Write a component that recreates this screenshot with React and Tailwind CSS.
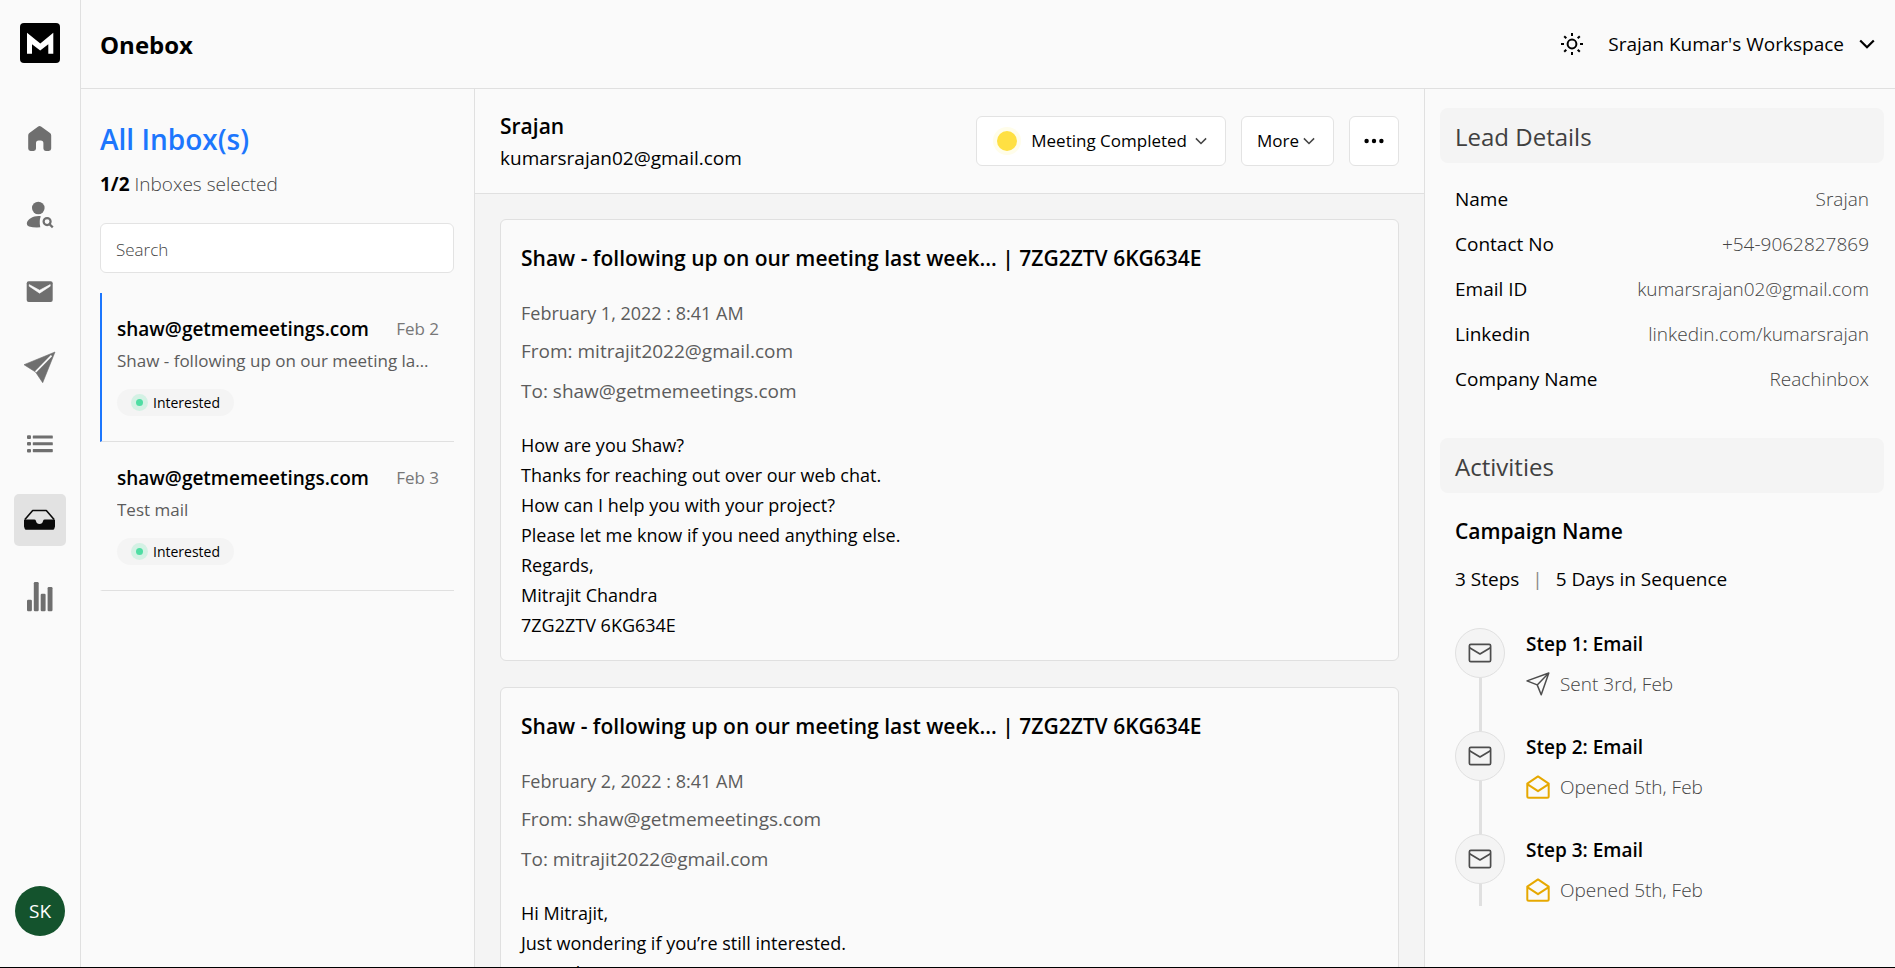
import React from "react";

function Logo() {
  return (
    <svg width="40" height="40" viewBox="0 0 40 40" aria-hidden="true">
      <rect width="40" height="40" rx="4" fill="#000" />
      <path d="M7 9.7 20.3 20.4 33.3 9.7V30.7H28.3V21.3L20.2 27.4 12 21.3V30.7H7Z" fill="#fff" />
    </svg>
  );
}

function NavSvg({ children }) {
  return (
    <svg width="52" height="52" viewBox="0 0 52 52" aria-hidden="true">
      {children}
    </svg>
  );
}

const GREY = "#6f6f6f";

const navItems = [
  {
    label: "Home",
    icon: (
      <path
        fill={GREY}
        d="M24.2 12.5a2.3 2.3 0 0 1 2.8 0l9 6.6q1.2 1 1.2 2.4V34.6a2.4 2.4 0 0 1-2.4 2.4h-3a2.4 2.4 0 0 1-2.4-2.4V29.2q0-2.6-2.6-2.6h-2.2q-2.6 0-2.6 2.6v5.4a2.4 2.4 0 0 1-2.4 2.4h-3a2.4 2.4 0 0 1-2.4-2.4V21.5q0-1.4 1.2-2.4Z"
      />
    ),
  },
  {
    label: "Leads",
    icon: (
      <>
        <circle cx="24.3" cy="18" r="6.3" fill={GREY} />
        <path d="M26.8 26.2Q24.9 31 26.3 37.3 20 37.8 15 36.5 12.6 35.6 12.8 33.3C13.5 29 19.5 25.4 26.8 26.2Z" fill={GREY} />
        <circle cx="33.1" cy="31.6" r="3.5" fill="none" stroke={GREY} strokeWidth="2.2" />
        <path d="M35.6 34.2 38 36.6" stroke={GREY} strokeWidth="2.2" strokeLinecap="square" />
      </>
    ),
  },
  {
    label: "Mail",
    icon: (
      <>
        <rect x="12.7" y="15.3" width="26" height="20.7" rx="2" fill={GREY} />
        <path d="M15.2 18.6V20.2L25.6 27.2 36.2 20.2V18.6L25.6 24.2Z" fill="#fafafa" stroke="#fafafa" strokeWidth=".6" />
      </>
    ),
  },
  {
    label: "Send",
    icon: (
      <>
        <path d="M10 22.7 41 10 28.7 40.7 21.5 30Z" fill={GREY} stroke={GREY} strokeWidth=".6" strokeLinejoin="round" />
        <path d="M21.6 29.8 37.5 13.6" stroke="#fafafa" strokeWidth="1.7" />
      </>
    ),
  },
  {
    label: "Sequences",
    icon: (
      <g fill={GREY}>
        {[17.3, 24, 30.9].map((y) => (
          <React.Fragment key={y}>
            <rect x="13" y={y} width="4" height="3.6" rx="1" />
            <rect x="18.8" y={y + 0.2} width="20" height="3.1" rx=".6" />
          </React.Fragment>
        ))}
      </g>
    ),
  },
  {
    label: "Onebox",
    active: true,
    icon: (
      <>
        <path d="M10.9 25.6 18.7 16.5H32.3L40.1 25.6" fill="none" stroke="#0a0a0a" strokeWidth="1.6" strokeLinejoin="round" />
        <path d="M10 26Q10 25.4 10.6 25.4H20.2Q21.6 25.4 21.9 26.8 22.6 30 25.5 30T29.1 26.8Q29.4 25.4 30.8 25.4H40.4Q41 25.4 41 26V32.5L40.2 35.1Q40 35.7 39 35.7H12Q11 35.7 10.8 35.1L10 32.5Z" fill="#0a0a0a" />
      </>
    ),
  },
  {
    label: "Analytics",
    icon: (
      <g fill={GREY}>
        <rect x="13" y="29.7" width="4.9" height="11.6" rx="1.2" />
        <rect x="19.8" y="12" width="4.9" height="29.3" rx="1.2" />
        <rect x="26.7" y="23.7" width="4.9" height="17.6" rx="1.2" />
        <rect x="33.6" y="17" width="4.9" height="24.3" rx="1.2" />
      </g>
    ),
  },
];

function Chevron({ width, height, strokeWidth, color }) {
  return (
    <svg width={width} height={height} viewBox="0 0 16 10" fill="none" stroke={color} strokeWidth={strokeWidth} aria-hidden="true">
      <path d="M1.2 1.5 8 8.3 14.8 1.5" />
    </svg>
  );
}

function SunIcon() {
  return (
    <svg width="24" height="24" viewBox="0 0 24 24" fill="none" stroke="#000" strokeWidth="2" aria-hidden="true">
      <circle cx="12" cy="12" r="4.4" />
      <path d="M12 1v3M12 20v3M1 12h3M20 12h3M4.2 4.2l2.1 2.1M17.7 17.7l2.1 2.1M4.2 19.8l2.1-2.1M17.7 6.3l2.1-2.1" />
    </svg>
  );
}

function EnvelopeIcon() {
  return (
    <svg width="24" height="20" viewBox="0 0 24 20" fill="none" stroke="#4d4d4d" strokeWidth="1.7" strokeLinejoin="round" aria-hidden="true">
      <rect x="1.4" y="1.3" width="21.2" height="17.4" rx="1.4" />
      <path d="M1.6 4.8 12 10.9 22.4 4.8" />
    </svg>
  );
}

function SentIcon() {
  return (
    <svg width="24" height="24" viewBox="0 0 24 24" fill="none" stroke="#4d4d4d" strokeWidth="1.5" strokeLinejoin="round" aria-hidden="true">
      <path d="M1 8.9 22.8 1 15.2 22.7 11.2 12.9ZM11.2 12.9 22.8 1" />
    </svg>
  );
}

function OpenedIcon() {
  return (
    <svg width="24" height="24" viewBox="0 0 24 24" fill="none" stroke="#e6a800" strokeWidth="2" strokeLinejoin="round" aria-hidden="true">
      <path d="M1.3 8.6 12 1.4 22.7 8.6V21.2Q22.7 22.7 21.2 22.7H2.8Q1.3 22.7 1.3 21.2ZM1.3 9.2 12 16.2 22.7 9.2" />
    </svg>
  );
}

const threads = [
  { email: "shaw@getmemeetings.com", date: "Feb 2", subject: "Shaw - following up on our meeting last week...", selected: true },
  { email: "shaw@getmemeetings.com", date: "Feb 3", subject: "Test mail" },
];

const messages = [
  {
    date: "February 1, 2022 : 8:41 AM",
    from: "mitrajit2022@gmail.com",
    to: "shaw@getmemeetings.com",
    body: [
      "How are you Shaw?",
      "Thanks for reaching out over our web chat.",
      "How can I help you with your project?",
      "Please let me know if you need anything else.",
      "Regards,",
      "Mitrajit Chandra",
      "7ZG2ZTV 6KG634E",
    ],
  },
  {
    date: "February 2, 2022 : 8:41 AM",
    from: "shaw@getmemeetings.com",
    to: "mitrajit2022@gmail.com",
    body: ["Hi Mitrajit,", "Just wondering if you’re still interested.", "Regards,"],
  },
];

const details = [
  ["Name", "Srajan"],
  ["Contact No", "+54-9062827869"],
  ["Email ID", "kumarsrajan02@gmail.com"],
  ["Linkedin", "linkedin.com/kumarsrajan"],
  ["Company Name", "Reachinbox"],
];

const steps = [
  { title: "Step 1: Email", status: "Sent 3rd, Feb", icon: <SentIcon /> },
  { title: "Step 2: Email", status: "Opened 5th, Feb", icon: <OpenedIcon /> },
  { title: "Step 3: Email", status: "Opened 5th, Feb", icon: <OpenedIcon /> },
];

function Sidebar() {
  return (
    <aside className="flex w-[81px] shrink-0 flex-col items-center border-r border-[#e0e0e0] pt-[23px] pb-[31px]">
      <a href="#home" aria-label="Home page">
        <Logo />
      </a>
      <nav className="mt-[51px] flex flex-col gap-6">
        {navItems.map((item) => (
          <a
            key={item.label}
            href={"#" + item.label.toLowerCase()}
            aria-label={item.label}
            className={item.active ? "rounded-[5px] bg-[#e2e2e2]" : "rounded-[5px]"}
          >
            <NavSvg>{item.icon}</NavSvg>
          </a>
        ))}
      </nav>
      <button className="mt-auto flex size-[50px] items-center justify-center rounded-full bg-[#14532d] text-[19px] text-white">SK</button>
    </aside>
  );
}

function Header() {
  return (
    <header className="flex h-[89px] shrink-0 items-center justify-between border-b border-[#e0e0e0] pr-5 pl-[19px]">
      <h1 className="pt-0.5 text-2xl font-bold">Onebox</h1>
      <div className="flex items-center gap-6">
        <button aria-label="Toggle theme">
          <SunIcon />
        </button>
        <button className="flex items-center gap-[15px] text-[19px]">
          Srajan Kumar's Workspace
          <Chevron width={16} height={10} strokeWidth={2.2} color="#000" />
        </button>
      </div>
    </header>
  );
}

function InboxList() {
  return (
    <section className="w-[394px] shrink-0 border-r border-[#e0e0e0] pt-[30px] pr-5 pl-[19px]">
      <h2 className="text-[28px] leading-10 font-semibold text-[#1c76fd]">All Inbox(s)</h2>
      <p className="mt-[13px] text-[19px] leading-6 font-light text-[#444]">
        <span className="font-bold text-black">1/2</span> Inboxes selected
      </p>
      <input
        type="search"
        aria-label="Search"
        placeholder="Search"
        className="mt-[27px] h-[50px] w-full rounded-md border border-[#e3e3e3] bg-white px-[15px] pt-0.5 text-[17px] font-light outline-none placeholder:text-[#444]"
      />
      <ul className="mt-5">
        {threads.map((t) => (
          <li
            key={t.date}
            className={
              t.selected
                ? "h-[149px] border-b border-l-2 border-b-[#e0e0e0] border-l-[#1c76fd] px-[15px] pt-5"
                : "h-[149px] border-b border-l-2 border-b-[#e0e0e0] border-l-transparent px-[15px] pt-5"
            }
          >
            <div className="flex items-center justify-between">
              <span className="text-[19px] leading-8 font-semibold">{t.email}</span>
              <span className="text-[17px] leading-8 text-[#777]">{t.date}</span>
            </div>
            <p className="truncate pr-1 text-[17px] leading-8 text-[#5c5c5c]">{t.subject}</p>
            <span className="mt-3 inline-flex h-[27px] items-center gap-[5px] rounded-full bg-[#f4f4f4] px-[14px] text-sm">
              <span className="flex size-[17px] items-center justify-center rounded-full bg-[#d3f1e4]">
                <span className="size-[7px] rounded-full bg-[#4fdda3]" />
              </span>
              Interested
            </span>
          </li>
        ))}
      </ul>
    </section>
  );
}

function Conversation() {
  return (
    <main className="flex min-w-0 flex-1 flex-col overflow-hidden border-r border-[#e0e0e0] bg-[#f4f4f4]">
      <div className="flex h-[105px] shrink-0 items-center justify-between border-b border-[#e0e0e0] bg-[#fafafa] px-[25px]">
        <div className="pt-0.5">
          <h2 className="text-[21px] leading-8 font-semibold">Srajan</h2>
          <p className="text-[19px] leading-8">kumarsrajan02@gmail.com</p>
        </div>
        <div className="flex gap-[15px]">
          <button className="flex h-[50px] items-center rounded-md border border-[#e3e3e3] bg-white pr-[18px] pl-4 text-[17px]">
            <span className="flex size-7 items-center justify-center rounded-full bg-[#fffdea]">
              <span className="size-5 rounded-full bg-[#ffe042]" />
            </span>
            <span className="mr-2 ml-[10px]">Meeting Completed</span>
            <Chevron width={12} height={8} strokeWidth={2} color="#444" />
          </button>
          <button className="flex h-[50px] items-center gap-1 rounded-md border border-[#e3e3e3] bg-white pr-[18px] pl-[15px] text-[17px]">
            More
            <Chevron width={12} height={8} strokeWidth={2} color="#444" />
          </button>
          <button aria-label="More actions" className="flex size-[50px] items-center justify-center rounded-md border border-[#e3e3e3] bg-white">
            <svg width="20" height="6" viewBox="0 0 20 6" aria-hidden="true">
              <circle cx="2.6" cy="3" r="2.2" />
              <circle cx="10" cy="3" r="2.2" />
              <circle cx="17.4" cy="3" r="2.2" />
            </svg>
          </button>
        </div>
      </div>
      <div className="flex min-h-0 flex-1 flex-col gap-[26px] overflow-hidden p-[25px]">
        {messages.map((m) => (
          <article key={m.date} className="shrink-0 rounded-md border border-[#e0e0e0] bg-[#fafafa] px-5 pt-[22px] pb-5">
            <h3 className="text-[21px] leading-8 font-semibold">Shaw - following up on our meeting last week... | 7ZG2ZTV 6KG634E</h3>
            <div className="mt-5 text-[#5c5c5c]">
              <p className="text-lg leading-[38px]">{m.date}</p>
              <p className="text-[19px] leading-[38px]">From: {m.from}</p>
              <p className="mt-0.5 text-[19px] leading-[38px]">To: {m.to}</p>
            </div>
            <div className="mt-5 text-lg leading-[30px]">
              {m.body.map((line) => (
                <p key={line}>{line}</p>
              ))}
            </div>
          </article>
        ))}
      </div>
    </main>
  );
}

function DetailsPanel() {
  return (
    <aside className="w-[470px] shrink-0 overflow-hidden pt-[19px] pr-[11px] pl-[15px]">
      <h2 className="flex h-[55px] items-center rounded-lg bg-[#f4f4f4] px-[15px] pt-0.5 text-2xl text-[#404040]">Lead Details</h2>
      <dl className="mt-[14px] px-[15px] text-[19px]">
        {details.map(([label, value]) => (
          <div key={label} className="flex justify-between leading-[45px]">
            <dt>{label}</dt>
            <dd className="font-light text-[#444]">{value}</dd>
          </div>
        ))}
      </dl>
      <h2 className="mt-9 flex h-[55px] items-center rounded-lg bg-[#f4f4f4] px-[15px] pt-0.5 text-2xl text-[#404040]">Activities</h2>
      <div className="px-[15px]">
        <h3 className="mt-[22px] text-[21px] leading-8 font-semibold">Campaign Name</h3>
        <p className="mt-4 flex gap-[13px] text-[19px] leading-8">
          <span>3 Steps</span>
          <span className="text-[#888]">|</span>
          <span>5 Days in Sequence</span>
        </p>
        <ol className="mt-[33px]">
          {steps.map((s) => (
            <li key={s.title} className="flex h-[103px] gap-[21px] last:h-[72px]">
              <div className="flex flex-col items-center">
                <span className="flex size-[50px] shrink-0 items-center justify-center rounded-full border border-[#e0e0e0] bg-[#f4f4f4]">
                  <EnvelopeIcon />
                </span>
                <span className="w-[3px] flex-1 bg-[#e0e0e0]" />
              </div>
              <div>
                <h4 className="text-[19px] leading-8 font-semibold">{s.title}</h4>
                <p className="mt-2 flex items-center gap-[10px] text-[19px] leading-8 font-light text-[#444]">
                  {s.icon}
                  {s.status}
                </p>
              </div>
            </li>
          ))}
        </ol>
      </div>
    </aside>
  );
}

export default function App() {
  return (
    <div className="flex h-screen overflow-hidden border-b border-black bg-[#fafafa] font-['Open_Sans','Noto_Sans',sans-serif] text-black">
      <Sidebar />
      <div className="flex min-w-0 flex-1 flex-col">
        <Header />
        <div className="flex min-h-0 flex-1">
          <InboxList />
          <Conversation />
          <DetailsPanel />
        </div>
      </div>
    </div>
  );
}
